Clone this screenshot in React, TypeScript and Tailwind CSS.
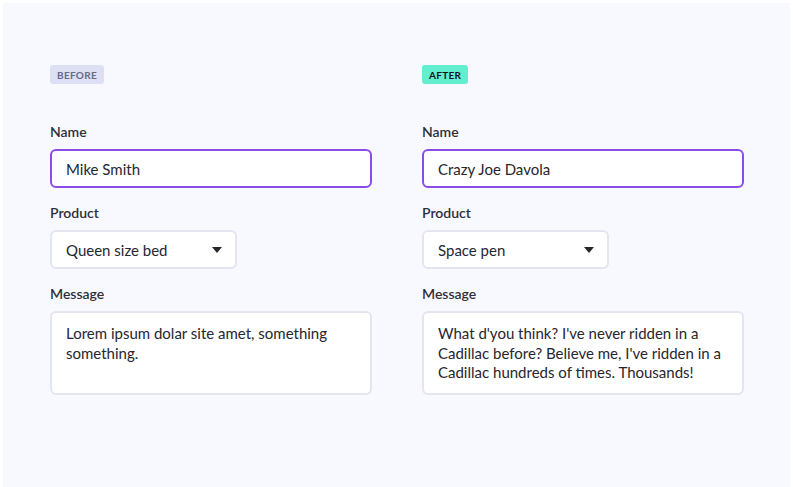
import React from "react";

const font = { fontFamily: "Lato, 'Noto Sans', sans-serif" };

function Caret() {
  return (
    <svg width="10" height="6" viewBox="0 0 10 6" className="shrink-0">
      <path d="M0 0 L10 0 L5 6 Z" fill="#26262e" />
    </svg>
  );
}

function Column({
  badge,
  badgeClass,
  name,
  product,
  message,
}: {
  badge: string;
  badgeClass: string;
  name: string;
  product: string;
  message: string;
}) {
  return (
    <div className="flex flex-col w-[322px]">
      <div className="flex">
        <span
          className={`h-[19px] px-[7px] pt-[1px] rounded-[3px] flex items-center text-[10px] font-bold tracking-[0.03em] ${badgeClass}`}
        >
          {badge}
        </span>
      </div>
      <div className="mt-[38px] h-5 text-[14px] leading-5 font-semibold text-[#2e2e38]">Name</div>
      <div className="mt-[7px] h-[39px] rounded-[6px] border-2 border-[#8b4ce6] bg-white flex items-center px-[14px] pt-[1px] text-[15px] text-[#26262e]">
        {name}
      </div>
      <div className="mt-[15px] h-5 text-[14px] leading-5 font-semibold text-[#2e2e38]">Product</div>
      <div className="mt-[7px] h-[39px] w-[187px] rounded-[6px] border-2 border-[#e3e6f0] bg-white flex items-center justify-between pl-[14px] pr-[13px] text-[15px] text-[#26262e]">
        <span className="pt-[1px]">{product}</span>
        <Caret />
      </div>
      <div className="mt-[15px] h-5 text-[14px] leading-5 font-semibold text-[#2e2e38]">Message</div>
      <div className="mt-[7px] h-[84px] rounded-[6px] border-2 border-[#e3e6f0] bg-white px-[14px] pt-[11px] text-[15px] leading-[19.5px] text-[#26262e]">
        {message}
      </div>
    </div>
  );
}

export default function App() {
  return (
    <div className="bg-white w-[793px] h-[487px] pt-[3px] px-[3px] overflow-hidden" style={font}>
      <div className="bg-[#f8f9fe] h-[484px] pl-[47px] pt-[62px] flex gap-[50px]">
        <Column
          badge="BEFORE"
          badgeClass="bg-[#dde0f4] text-[#666a85]"
          name="Mike Smith"
          product="Queen size bed"
          message="Lorem ipsum dolar site amet, something something."
        />
        <Column
          badge="AFTER"
          badgeClass="bg-[#62efd0] text-[#15151a]"
          name="Crazy Joe Davola"
          product="Space pen"
          message="What d'you think? I've never ridden in a Cadillac before? Believe me, I've ridden in a Cadillac hundreds of times. Thousands!"
        />
      </div>
    </div>
  );
}
